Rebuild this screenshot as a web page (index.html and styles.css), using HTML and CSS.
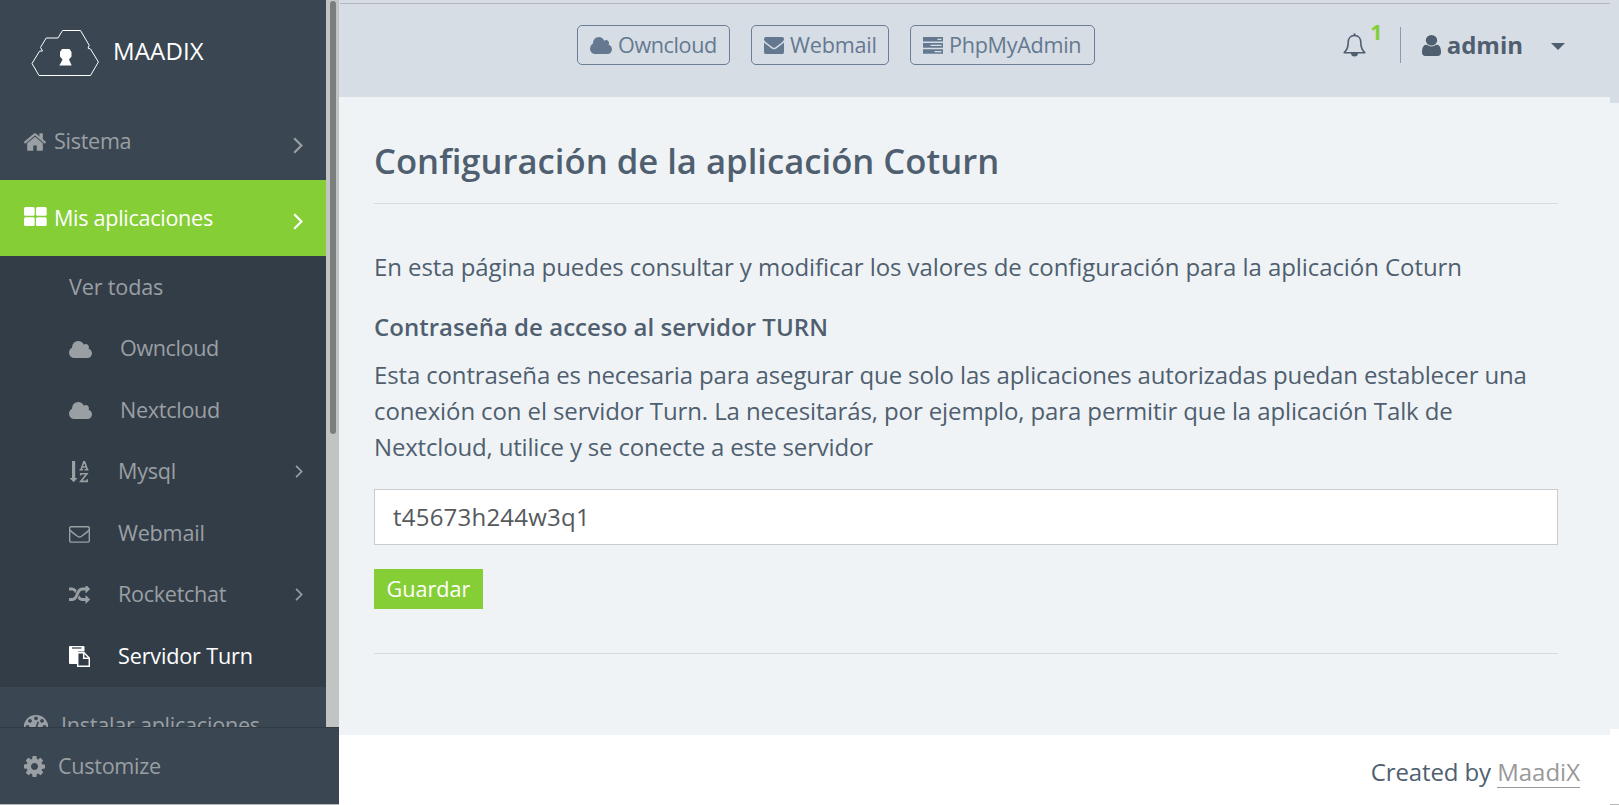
FILE: index.html
```html
<!DOCTYPE html>
<html lang="es">
<head>
<meta charset="utf-8">
<title>MAADIX - Coturn</title>
<link rel="stylesheet" href="styles.css">
</head>
<body>
<svg class="defs" width="0" height="0">
  <symbol id="cloud" viewBox="64 128 1920 1408" preserveAspectRatio="none"><path d="M1984 1152q0 159-112.5 271.5t-271.5 112.5h-1088q-185 0-316.5-131.5t-131.5-316.5q0-132 71-241.5t187-163.5q-2-28-2-43 0-212 150-362t362-150q158 0 286.5 88t187.5 230q70-62 166-62 106 0 181 75t75 181q0 75-41 138 129 30 213 134.5t84 239.5z"/></symbol>
  <symbol id="chevron" viewBox="0 0 10 17"><path d="M1.2 1.2 8.4 8.5 1.2 15.8" fill="none" stroke="currentColor" stroke-width="2.2"/></symbol>
</svg>
<div class="app">
  <aside class="sidebar">
    <div class="scroll-area">
      <div class="menu">
        <div class="brand">
          <svg class="logo" width="68" height="48" viewBox="0 0 68 48"><path d="M8 46.5 1 34.5 8.5 22.2 11.5 22 9.5 18.5 15.2 9H27L31.5 1.5H49.5L58.2 16.2 57 19.2 59.5 20 67.4 33 59.5 46.5Z" fill="none" stroke="#fff" stroke-width="1"/><path d="M31 20h7.500l2 3v4.500l-2.500 3 2 4.500v.5h.5v1H28.500v-1h.5L31.500 30.500 29 27.500V23Z" fill="#fff"/></svg>
          <span class="t-brand">MAADIX</span>
        </div>
        <div class="item">
          <svg width="22" height="18" viewBox="90 250 1612 1290"><path d="M1472 992v480q0 26-19 45t-45 19h-384v-384h-256v384h-384q-26 0-45-19t-19-45v-480q0-1 .5-3t.5-3l575-474 575 474q1 2 1 6zm223-69l-62 74q-8 9-21 11h-3q-13 0-21-7l-692-577-692 577q-12 8-24 7-13-2-21-11l-62-74q-8-10-7-23.500t11-21.500l719-599q32-26 76-26t76 26l244 204v-195q0-14 9-23t23-9h192q14 0 23 9t9 23v408l219 182q10 8 11 21.500t-7 23.500z"/></svg>
          <span class="t-sistema">Sistema</span>
          <svg class="arrow" width="10" height="17"><use href="#chevron"/></svg>
        </div>
        <div class="item active">
          <svg class="icon-grid" width="23" height="19" viewBox="0 0 23 19"><rect width="10.700" height="8.700" rx="1.500"/><rect x="12" width="10.700" height="8.700" rx="1.500"/><rect y="10.200" width="10.700" height="8.700" rx="1.500"/><rect x="12" y="10.200" width="10.700" height="8.700" rx="1.500"/></svg>
          <span class="t-apps">Mis aplicaciones</span>
          <svg class="arrow" width="10" height="17"><use href="#chevron"/></svg>
        </div>
        <div class="submenu">
          <div class="sub"><span class="t-ver">Ver todas</span></div>
          <div class="sub"><svg class="sub-cloud" width="23" height="17"><use href="#cloud"/></svg><span class="wide t-own">Owncloud</span></div>
          <div class="sub"><svg class="sub-cloud" width="23" height="17"><use href="#cloud"/></svg><span class="wide t-next">Nextcloud</span></div>
          <div class="sub"><svg class="sub-icon sort" width="21" height="22" viewBox="0 0 21 22"><path d="M3 0h3.200v17h2.300L4.700 21.200 .5 17H3Z"/><path d="M10.500 8.800H14M15.500 8.800H19.500M12.100 8.600 14.800.8h.8l2.700 7.800M13.200 6h4.200M11.700 14.600V12.700h6.200l-6.200 7.700h6.500v-2.200" fill="none" stroke="currentColor" stroke-width="1.600"/></svg><span class="t-mysql">Mysql</span><svg class="arrow small" width="8" height="13"><use href="#chevron"/></svg></div>
          <div class="sub"><svg class="sub-icon mail" width="21" height="17" viewBox="0 0 21 17"><rect x=".7" y=".7" width="19.600" height="15.400" rx="1.300" fill="none" stroke="currentColor" stroke-width="1.400"/><path d="M1 4Q2 5.500 8.500 10.300q2 1.400 4 0Q19 5.500 20 4" fill="none" stroke="currentColor" stroke-width="1.400"/></svg><span class="t-mail">Webmail</span></div>
          <div class="sub"><svg class="sub-icon" width="21" height="18" viewBox="0 128 1792 1536"><path d="M666 481q-60 92-137 273-22-45-37-72.500t-40.500-63.500-51-56.500-63-35-81.500-14.500h-224q-14 0-23-9t-9-23v-192q0-14 9-23t23-9h224q250 0 410 225zm1126 799q0 14-9 23l-320 320q-9 9-23 9-13 0-22.500-9.500t-9.500-22.500v-192q-32 0-85 .5t-81 1-73-1-71-5-64-10.500-63-18.500-58-28.500-59-40-55-53.500-56-69.500q59-93 136-273 22 45 37 72.500t40.500 63.500 51 56.500 63 35 81.500 14.500h256v-192q0-14 9-23t23-9q12 0 24 10l319 319q9 9 9 23zm0-896q0 14-9 23l-320 320q-9 9-23 9-13 0-22.500-9.500t-9.500-22.500v-192h-256q-48 0-87 15t-69 45-51 61.500-45 77.500q-32 62-78 171-29 66-49.500 111t-54 105-64 100-74 83-90 68.500-106.500 42-128 16.500h-224q-14 0-23-9t-9-23v-192q0-14 9-23t23-9h224q48 0 87-15t69-45 51-61.500 45-77.500q32-62 78-171 29-66 49.500-111t54-105 64-100 74-83 90-68.500 106.500-42 128-16.500h256v-192q0-14 9-23t23-9q12 0 24 10l319 319q9 9 9 23z"/></svg><span class="t-rocket">Rocketchat</span><svg class="arrow small" width="8" height="13"><use href="#chevron"/></svg></div>
          <div class="sub selected"><svg class="sub-icon" width="21" height="21" viewBox="0 0 21 21"><path d="M1 0h13.500q1 0 1 1v4.500H9.500Q8 5.500 8 7V18H1q-1 0-1-1V1Q0 0 1 0Z"/><path d="M3 2h9.500" stroke="#333d47" stroke-width="1.200"/><path d="M8.700 6.700h6.300l5.300 5.300v8.300H8.700Z" fill="#333d47" stroke="currentColor" stroke-width="1.500"/><path d="M14.700 6.700v5.500h5.500" fill="none" stroke="currentColor" stroke-width="1.500"/></svg><span class="t-turn">Servidor Turn</span></div>
        </div>
        <div class="item install">
          <svg width="24" height="20" viewBox="0 0 24 20"><path fill-rule="evenodd" d="M12 0a12 12 0 0 1 10 19H2A12 12 0 0 1 12 0ZM12 1.500a1.900 1.900 0 1 0 .01 0ZM6 4a1.900 1.900 0 1 0 .01 0ZM18 4a1.900 1.900 0 1 0 .01 0ZM3.500 10a1.900 1.900 0 1 0 .01 0ZM20.500 10a1.900 1.900 0 1 0 .01 0ZM13.500 6.500 11.500 12a2.500 2.500 0 1 0 1.800.3L15 7Z"/></svg>
          <span class="t-install">Instalar aplicaciones</span>
        </div>
      </div>
      <div class="track"><div class="thumb"></div></div>
    </div>
    <div class="customize">
      <svg width="21" height="21" viewBox="128 128 1536 1536"><path d="M1152 896q0-106-75-181t-181-75-181 75-75 181 75 181 181 75 181-75 75-181zm512-109v222q0 12-8 23t-20 13l-185 28q-19 54-39 91 35 50 107 138 10 12 10 25t-9 23q-27 37-99 108t-94 71q-12 0-26-9l-138-108q-44 23-91 38-16 136-29 186-7 28-36 28h-222q-14 0-24.500-8.500t-11.500-21.500l-28-184q-49-16-90-37l-141 107q-10 9-25 9-14 0-25-11-126-114-165-168-7-10-7-23 0-12 8-23 15-21 51-66.500t54-70.500q-27-50-41-99l-183-27q-13-2-21-12.500t-8-23.500v-222q0-12 8-23t19-13l186-28q14-46 39-92-40-57-107-138-10-12-10-24 0-10 9-23 26-36 98.500-107.500t94.500-71.500q13 0 26 10l138 107q44-23 91-38 16-136 29-186 7-28 36-28h222q14 0 24.500 8.500t11.500 21.500l28 184q49 16 90 37l142-107q9-9 24-9 13 0 25 10 129 119 165 170 7 8 7 22 0 12-8 23-15 21-51 66.500t-54 70.500q26 50 41 98l183 28q13 2 21 12.500t8 23.500z"/></svg>
      <span class="t-custom">Customize</span>
    </div>
  </aside>
  <div class="main">
    <header class="topbar">
      <nav class="links">
        <a class="pill own"><svg width="22" height="17"><use href="#cloud"/></svg><span class="t-pown">Owncloud</span></a>
        <a class="pill web"><svg width="20" height="17" viewBox="0 256 1792 1408" preserveAspectRatio="none"><path d="M1792 710v794q0 66-47 113t-113 47h-1472q-66 0-113-47t-47-113v-794q44 49 101 87 362 246 497 345 57 42 92.500 65.500t94.500 48 110 24.500h2q51 0 110-24.500t94.500-48 92.500-65.500q170-123 498-345 57-39 100-87zm0-294q0 79-49 151t-122 123q-376 261-468 325-10 7-42.500 31t-54 38.500-52 32.500-57.500 27-50 9h-2q-23 0-50-9t-57.500-27-52-32.500-54-38.500-42.500-31q-91-64-262-182.500t-205-142.500q-62-42-117-115.500t-55-136.500q0-78 41.500-130t118.500-52h1472q65 0 112.500 47t47.500 113z"/></svg><span class="t-pmail">Webmail</span></a>
        <a class="pill php"><svg width="20" height="17" viewBox="0 0 20 17"><path fill-rule="evenodd" d="M0 0h20v4.600H0ZM14.500 1.700v1.300h4V1.700ZM0 6.100h20v4.600H0ZM7.500 7.800v1.300h11V7.800ZM0 12.200h20v4.600H0ZM11.500 13.900v1.300h7v-1.300Z"/></svg><span class="t-pphp">PhpMyAdmin</span></a>
      </nav>
      <div class="account">
        <svg class="bell" width="23" height="24" viewBox="0 0 23 24"><path d="M11.500 2.500C7 2.500 5.200 6 5.200 9.500c0 5-1.700 8-4 10.200h20.600c-2.300-2.200-4-5.200-4-10.200 0-3.500-1.800-7-6.300-7Z" fill="none" stroke="currentColor" stroke-width="1.600" stroke-linejoin="round"/><path d="M10.500.5h2v2.500h-2ZM8 20h7a3.500 3.500 0 0 1-7 0Z"/></svg>
        <span class="count">1</span>
        <div class="profile">
          <svg width="19" height="21" viewBox="256 128 1280 1536" preserveAspectRatio="none"><path d="M1536 1399q0 109-62.500 187t-150.500 78h-854q-88 0-150.500-78t-62.500-187q0-85 8.500-160.500t31.500-152 58.500-131 94-89 134.500-34.500q131 128 313 128t313-128q76 0 134.500 34.500t94 89 58.500 131 31.500 152 8.500 160.500zm-256-887q0 159-112.500 271.500t-271.500 112.500-271.500-112.500-112.500-271.500 112.500-271.500 271.500-112.500 271.500 112.500 112.500 271.500z"/></svg>
          <span class="t-admin">admin</span>
          <svg class="caret" width="14" height="7" viewBox="0 0 14 7"><path d="M0 0h14L7 7Z"/></svg>
        </div>
      </div>
    </header>
    <main class="content">
      <h1>Configuración de la aplicación Coturn</h1>
      <p class="intro">En esta página puedes consultar y modificar los valores de configuración para la aplicación Coturn</p>
      <h2>Contraseña de acceso al servidor TURN</h2>
      <p class="help">Esta contraseña es necesaria para asegurar que solo las aplicaciones autorizadas puedan establecer una<br><span class="line-two">conexión con el servidor Turn. La necesitarás, por ejemplo, para permitir que la aplicación Talk de</span><br><span class="line-three">Nextcloud, utilice y se conecte a este servidor</span></p>
      <input class="field" type="text" value="t45673h244w3q1">
      <button class="save">Guardar</button>
      <hr class="rule">
    </main>
    <footer class="footer"><span class="by">Created by</span> <a class="credit">MaadiX</a></footer>
  </div>
  <div class="edge"><div class="edge-top"></div><div class="edge-mid"></div><div class="edge-end"></div></div>
</div>
</body>
</html>
```
FILE: styles.css
```css
* { box-sizing: border-box; }
body { margin: 0; font-family: "Open Sans", sans-serif; font-size: 24px; line-height: 36px; color: #4f5f6f; background: #fff; overflow: hidden; }
svg { display: block; flex: none; fill: currentColor; }
.defs { position: absolute; }
.app { display: flex; width: 1619px; height: 805px; }

.sidebar { width: 339px; flex: none; display: flex; flex-direction: column; color: #9a9fa4; font-size: 21.600px; letter-spacing: -.3px; white-space: nowrap; border-bottom: 1px solid #b7b9b8; }
.scroll-area { height: 727px; display: flex; overflow: hidden; }
.menu { width: 326px; height: 727px; overflow: hidden; background: #3a4651; }
.track { width: 13px; background: #c2c4c3; padding: 1px 3px 0 4px; }
.thumb { height: 433px; border-radius: 3px; background: #7a7e7d; }
.brand { height: 104px; padding: 0 0 0 31px; display: flex; align-items: center; gap: 14px; color: #fff; font-size: 24px; letter-spacing: .15px; }
.t-brand { margin-top: -2px; }
.logo { margin-top: 2px; }
.item { height: 76px; padding: 0 23px 0 24px; display: flex; align-items: center; }
.item > span { margin-left: 8px; }
.item .t-sistema { margin-top: -2px; }
.item .t-apps { margin-left: 7px; }
.icon-grid { margin-top: -3px; }
.active { background: #85ce36; color: #fff; }
.arrow { margin: 6px 0 0 auto; }
.arrow.small { margin: 0 0 0 auto; }
.submenu { background: #333d47; height: 431px; }
.sub { height: 61.570px; padding: 0 23px 0 69px; display: flex; align-items: center; }
.sub-cloud { margin-top: 2px; }
.sub-icon + span { margin-left: 28px; }
.mail { margin-top: 3px; }
.sort { margin-top: 1px; }
.wide { margin-left: 28px; }
.t-ver, .t-turn { letter-spacing: -.16px; }
.t-mysql, .t-mail { letter-spacing: -.22px; }
.t-own { letter-spacing: -.4px; }
.t-rocket { margin-top: -1px; }
.selected { color: #fff; }
.item.install > span { margin-left: 13px; }
.t-install { letter-spacing: -.25px; }
.customize { height: 77px; border-top: 1px solid #313b44; background: #3a4651; padding: 0 0 0 24px; display: flex; align-items: center; gap: 13px; }

.main { width: 1271px; flex: none; display: flex; flex-direction: column; }
.topbar { height: 97px; background: #d7dde5 linear-gradient(#b3b8bc, #b3b8bc) 1px 3px / 100% 1px no-repeat; display: flex; justify-content: space-between; padding: 25px 45px 0 238px; }
.links { display: flex; gap: 21px; }
.pill { height: 40px; border: 1px solid #6a7f95; border-radius: 5px; display: flex; align-items: center; padding: 0 0 0 12px; gap: 6px; color: #647990; font-size: 21.600px; letter-spacing: -.3px; white-space: nowrap; }
.own { width: 153px; letter-spacing: -.4px; }
.web { width: 138px; letter-spacing: -.2px; }
.php { width: 185px; }
.account { display: flex; height: 40px; align-items: center; }
.count { color: #85ce36; font-size: 21.600px; font-weight: 700; line-height: 20px; margin: -27px 0 0 4px; }
.profile { height: 36px; border-left: 1px solid #8a9cb0; margin-left: 17px; padding-left: 21px; display: flex; align-items: center; font-weight: 700; }
.t-admin { margin-left: 6px; }
.caret { margin: 3px 0 0 28px; }
.content { height: 638px; background: #eff3f6; padding: 38px 52px 0 35px; }
h1 { margin: 0 0 45px; height: 69px; border-bottom: 1px solid #d7dbde; font-size: 34.670px; line-height: 52px; font-weight: 600; white-space: nowrap; }
.intro { margin: 0 0 24px; white-space: nowrap; letter-spacing: -.074px; }
h2 { margin: 0 0 12px; font-size: 24px; line-height: 36px; font-weight: 600; letter-spacing: .03px; }
.help { margin: 0 0 24px; white-space: nowrap; letter-spacing: -.14px; }
.line-two { letter-spacing: -.115px; }
.line-three { letter-spacing: -.17px; }
.field { display: block; width: 100%; height: 56px; border: 1px solid #c9cccf; padding: 0 18px 2px; background: #fff; font: 24px "Open Sans", sans-serif; letter-spacing: .22px; color: #55595c; border-radius: 0; }
.save { display: block; margin: 24px 0 44px; width: 109px; height: 40px; border: 0; padding: 0 0 2px; background: #85ce36; color: #fff; font: 21.600px "Open Sans", sans-serif; }
.rule { margin: 0; border: 0; border-top: 1px solid #d7dbde; }
.footer { flex: 1; padding: 19px 30px 0 0; text-align: right; background: #fff; }
.by { letter-spacing: -.13px; }
.credit { color: #999; display: inline-block; line-height: 31px; border-bottom: 1px solid #999; }
.edge { width: 9px; display: flex; flex-direction: column; }
.edge-top { height: 103px; background: #d7dde5; }
.edge-mid { height: 626px; background: #eff3f6; }
.edge-end { flex: 1; background: #fff; border-bottom: 1px solid #b7b9b8; }
```
